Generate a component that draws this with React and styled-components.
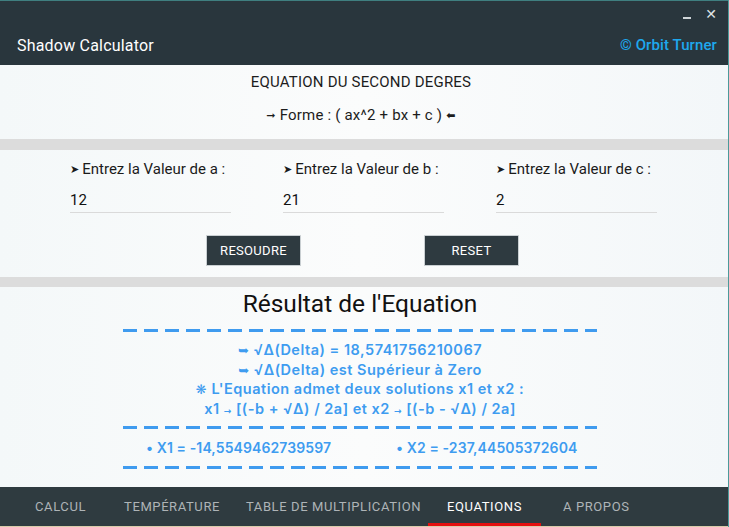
import React from 'react'
import styled, { createGlobalStyle } from 'styled-components'

const GlobalStyle = createGlobalStyle`
	html, body {
		margin: 0;
		padding: 0;
		background: #f6f9fa;
	}
	* {
		box-sizing: border-box;
	}
`

let Window = styled.div`
	width: 729px;
	height: 527px;
	display: flex;
	flex-direction: column;
	font-family: Roboto, "Liberation Sans", sans-serif;
	background: linear-gradient(90deg, #f4f8f9 0%, #fbfcfc 50%, #f3f7f9 100%);
	border-right: 1px solid #4c9a9a;
	overflow: hidden;
`

let TitleBar = styled.header`
	height: 65px;
	flex: none;
	background: #29363d;
	border-top: 1px solid #3f7f80;
	display: flex;
	flex-direction: column;
	padding: 0 11px 0 17px;
`

let WindowControls = styled.div`
	display: flex;
	justify-content: flex-end;
	align-items: center;
	gap: 14px;
	height: 26px;
	color: #e8ecee;
`

let Minimize = styled.span`
	width: 8px;
	height: 2px;
	background: #cfd5d8;
	margin-top: 8px;
`

let Close = styled.span`
	font-size: 14px;
	font-family: "DejaVu Sans", sans-serif;
	color: #dfe3e5;
	line-height: 1;
`

let TitleRow = styled.div`
	display: flex;
	justify-content: space-between;
	align-items: center;
	height: 36px;
`

let AppName = styled.h1`
	margin: 0;
	font-size: 16px;
	font-weight: 400;
	color: #ffffff;
	letter-spacing: 0.2px;
`

let Brand = styled.span`
	font-size: 15px;
	font-weight: 500;
	color: #1ea8ee;
	letter-spacing: 0.1px;
`

let Header = styled.section`
	height: 74px;
	flex: none;
	display: flex;
	flex-direction: column;
	align-items: center;
	padding: 8px 6px 0 0;
	gap: 15px;
	color: #1d1d1d;
	font-size: 15px;
	letter-spacing: 0.2px;
`

let HeaderLine = styled.div`
	line-height: 18px;
`

let Arrow = styled.span`
	font-family: "DejaVu Sans", sans-serif;
	font-weight: 700;
	font-size: 11px;
	vertical-align: 1px;
`

let Band = styled.div`
	height: ${ p => p.h }px;
	flex: none;
	background: #dcdcdc;
`

let Inputs = styled.section`
	height: 127px;
	flex: none;
	padding-top: 9px;
`

let Fields = styled.div`
	display: grid;
	grid-template-columns: repeat(3, 161px);
	column-gap: 52px;
	margin-left: 70px;
`

let Field = styled.label`
	display: flex;
	flex-direction: column;
`

let Label = styled.span`
	font-size: 15px;
	color: #1b1b1b;
	line-height: 20px;
	white-space: nowrap;
`

let Chevron = styled.span`
	font-family: "DejaVu Sans", sans-serif;
	font-size: 11px;
	margin-right: 3px;
	vertical-align: 1px;
`

let ValueInput = styled.input`
	margin-top: 11px;
	width: 161px;
	border: none;
	border-bottom: 1px solid #dadada;
	background: transparent;
	font-family: Roboto, "Liberation Sans", sans-serif;
	font-size: 15px;
	color: #111;
	padding: 0 0 3px 0;
	height: 22px;
	outline: none;
`

let Buttons = styled.div`
	display: flex;
	gap: 123px;
	margin: 22px 0 0 206px;
`

let Button = styled.button`
	width: 95px;
	height: 31px;
	background: #2e3a40;
	color: #ffffff;
	border: 1px solid #c9cfd2;
	border-radius: 1px;
	font-family: Roboto, "Liberation Sans", sans-serif;
	font-size: 13px;
	font-weight: 400;
	letter-spacing: 0.3px;
	cursor: pointer;
`

let Results = styled.section`
	flex: 1;
	display: flex;
	flex-direction: column;
	align-items: center;
	padding: 3px 8px 0 0;
`

let ResultTitle = styled.h2`
	margin: 0;
	font-size: 24.5px;
	font-weight: 400;
	color: #111;
	line-height: 28px;
`

let Dashes = styled.div`
	width: 474px;
	height: 3px;
	flex: none;
	margin: ${ p => p.m };
	background: repeating-linear-gradient(90deg, #3f9bef 0 14px, transparent 14px 21px);
`

let Explain = styled.div`
	font-family: Inter, "Open Sans", sans-serif;
	font-weight: 600;
	font-size: 14.5px;
	letter-spacing: 0.5px;
	line-height: 19.5px;
	color: #3e9cf0;
	text-align: center;
	white-space: nowrap;
`

let Glyph = styled.span`
	font-family: "DejaVu Sans", sans-serif;
	font-size: ${ p => p.size || 13 }px;
	line-height: 0;
`

let Roots = styled.div`
	width: 474px;
	display: grid;
	grid-template-columns: 250px 1fr;
	padding-left: 23px;
	font-family: Inter, "Open Sans", sans-serif;
	font-weight: 600;
	font-size: 14px;
	letter-spacing: 0.1px;
	line-height: 18px;
	color: #3e9cf0;
`

let Nav = styled.nav`
	height: 40px;
	flex: none;
	background: #2f3b40;
	display: flex;
	padding-left: 16px;
	border-bottom: 1px solid #d8ccaa;
`

let Tab = styled.div`
	position: relative;
	padding: 0 ${ p => p.px }px;
	display: flex;
	align-items: center;
	font-size: 13px;
	letter-spacing: 0.6px;
	color: ${ p => p.active ? '#ffffff' : '#aeb4b7' };
	${ p => p.active && `
		&::after {
			content: '';
			position: absolute;
			left: 0;
			right: 0;
			bottom: 0;
			height: 3px;
			background: #e3100f;
		}
	` }
`

const values = [ { id: 'a', v: '12' }, { id: 'b', v: '21' }, { id: 'c', v: '2' } ]

const tabs = [
	{ name: 'CALCUL', px: 19 },
	{ name: 'TEMPÉRATURE', px: 19 },
	{ name: 'TABLE DE MULTIPLICATION', px: 7 },
	{ name: 'EQUATIONS', px: 19, active: true },
	{ name: 'A PROPOS', px: 22 },
]

export default function App() {
	return (
		<Window>
			<GlobalStyle/>
			<TitleBar>
				<WindowControls>
					<Minimize/>
					<Close>✕</Close>
				</WindowControls>
				<TitleRow>
					<AppName>Shadow Calculator</AppName>
					<Brand>© Orbit Turner</Brand>
				</TitleRow>
			</TitleBar>

			<Header>
				<HeaderLine>EQUATION DU SECOND DEGRES</HeaderLine>
				<HeaderLine><Arrow>➞</Arrow> Forme : ( ax^2 + bx + c ) <Arrow>⬅</Arrow></HeaderLine>
			</Header>
			<Band h={ 11 }/>

			<Inputs>
				<Fields>
					{ values.map(f => (
						<Field key={ f.id }>
							<Label><Chevron>➤</Chevron>Entrez la Valeur de { f.id } :</Label>
							<ValueInput defaultValue={ f.v }/>
						</Field>
					)) }
				</Fields>
				<Buttons>
					<Button>RESOUDRE</Button>
					<Button>RESET</Button>
				</Buttons>
			</Inputs>
			<Band h={ 10 }/>

			<Results>
				<ResultTitle>Résultat de l'Equation</ResultTitle>
				<Dashes m="11px 0 8px"/>
				<Explain>
					<div><Glyph>➥</Glyph> √Δ(Delta) = 18,5741756210067</div>
					<div><Glyph>➥</Glyph> √Δ(Delta) est Supérieur à Zero</div>
					<div><Glyph>❋</Glyph> L'Equation admet deux solutions x1 et x2 :</div>
					<div>x1 <Glyph size={ 9 }>→</Glyph> [(-b + √Δ) / 2a] et x2 <Glyph size={ 9 }>→</Glyph> [(-b - √Δ) / 2a]</div>
				</Explain>
				<Dashes m="8px 0 10px"/>
				<Roots>
					<span>• X1 = -14,5549462739597</span>
					<span>• X2 = -237,44505372604</span>
				</Roots>
				<Dashes m="9px 0 0"/>
			</Results>

			<Nav>
				{ tabs.map(t => (
					<Tab key={ t.name } px={ t.px } active={ t.active }>{ t.name }</Tab>
				)) }
			</Nav>
		</Window>
	)
}
